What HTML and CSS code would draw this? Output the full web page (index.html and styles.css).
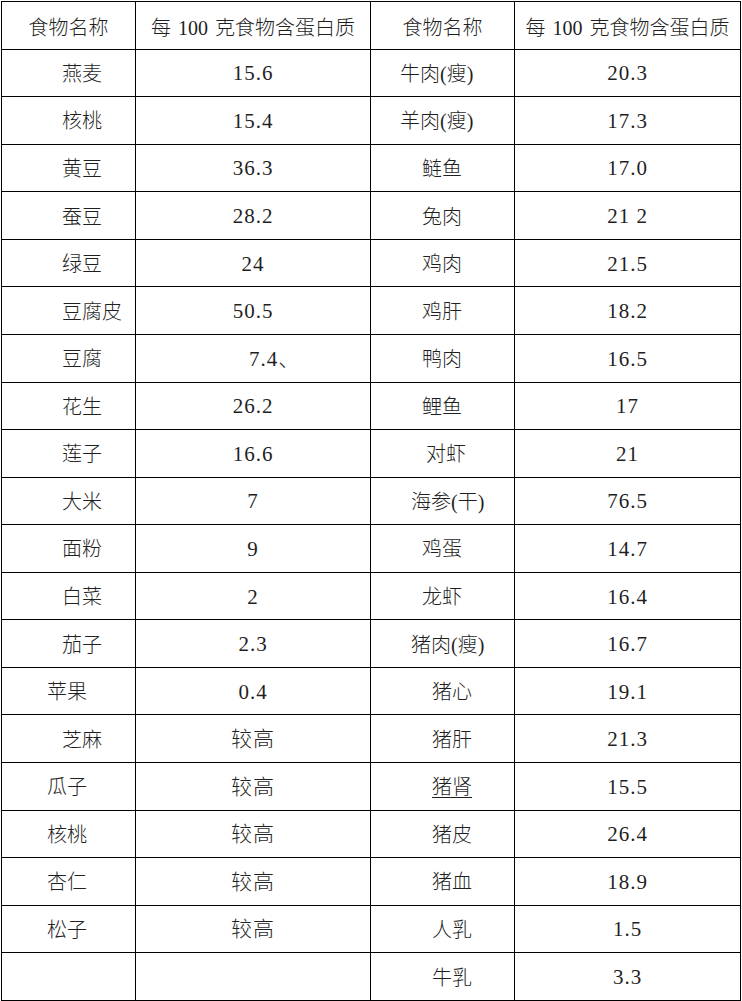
FILE: index.html
```html
<!DOCTYPE html>
<html lang="zh-CN">
<head>
<meta charset="utf-8">
<title>食物蛋白质含量</title>
<link rel="stylesheet" href="styles.css">
</head>
<body>
<table class="grid">
  <colgroup>
    <col class="c1"><col class="c2"><col class="c3"><col class="c4">
  </colgroup>
  <thead>
    <tr>
      <th>食物名称</th><th>每 100 克食物含蛋白质</th><th>食物名称</th><th>每 100 克食物含蛋白质</th>
    </tr>
  </thead>
  <tbody>
    <tr><td class="n in2">燕麦</td><td class="v">15.6</td><td class="m p0">牛肉(瘦)</td><td class="v">20.3</td></tr>
    <tr><td class="n in2">核桃</td><td class="v">15.4</td><td class="m p0">羊肉(瘦)</td><td class="v">17.3</td></tr>
    <tr><td class="n in2">黄豆</td><td class="v">36.3</td><td class="m p2">鲢鱼</td><td class="v">17.0</td></tr>
    <tr><td class="n in2">蚕豆</td><td class="v">28.2</td><td class="m p2">兔肉</td><td class="v">21 2</td></tr>
    <tr><td class="n in2">绿豆</td><td class="v">24</td><td class="m p2">鸡肉</td><td class="v">21.5</td></tr>
    <tr><td class="n in2">豆腐皮</td><td class="v">50.5</td><td class="m p2">鸡肝</td><td class="v">18.2</td></tr>
    <tr><td class="n in2">豆腐</td><td class="v off">7.4、</td><td class="m p2">鸭肉</td><td class="v">16.5</td></tr>
    <tr><td class="n in2">花生</td><td class="v">26.2</td><td class="m p2">鲤鱼</td><td class="v">17</td></tr>
    <tr><td class="n in2">莲子</td><td class="v">16.6</td><td class="m p3">对虾</td><td class="v">21</td></tr>
    <tr><td class="n in2">大米</td><td class="v">7</td><td class="m p1">海参(干)</td><td class="v">76.5</td></tr>
    <tr><td class="n in2">面粉</td><td class="v">9</td><td class="m p2">鸡蛋</td><td class="v">14.7</td></tr>
    <tr><td class="n in2">白菜</td><td class="v">2</td><td class="m p2">龙虾</td><td class="v">16.4</td></tr>
    <tr><td class="n in2">茄子</td><td class="v">2.3</td><td class="m p1">猪肉(瘦)</td><td class="v">16.7</td></tr>
    <tr><td class="n in1">苹果</td><td class="v">0.4</td><td class="m p4">猪心</td><td class="v">19.1</td></tr>
    <tr><td class="n in2">芝麻</td><td class="v">较高</td><td class="m p4">猪肝</td><td class="v">21.3</td></tr>
    <tr><td class="n in1">瓜子</td><td class="v">较高</td><td class="m p4"><span class="ul">猪肾</span></td><td class="v">15.5</td></tr>
    <tr><td class="n in1">核桃</td><td class="v">较高</td><td class="m p4">猪皮</td><td class="v">26.4</td></tr>
    <tr><td class="n in1">杏仁</td><td class="v">较高</td><td class="m p4">猪血</td><td class="v">18.9</td></tr>
    <tr><td class="n in1">松子</td><td class="v">较高</td><td class="m p4">人乳</td><td class="v">1.5</td></tr>
    <tr><td class="n in1"></td><td class="v"></td><td class="m p4">牛乳</td><td class="v">3.3</td></tr>
  </tbody>
</table>
</body>
</html>
```
FILE: styles.css
```css
html, body {
  margin: 0;
  padding: 0;
  background: #ffffff;
}

.grid {
  margin: 1px 0 0 1px;
  width: 740px;
  table-layout: fixed;
  border-collapse: separate;
  border-spacing: 0;
  border-left: 1px solid #000;
  border-top: 1px solid #000;
  font-family: "Liberation Serif", "Noto Sans CJK SC", serif;
  font-size: 20px;
  color: #1f1f1f;
}

.c1 { width: 134px; }
.c2 { width: 235px; }
.c3 { width: 144px; }
.c4 { width: 226px; }

.grid tr {
  height: 47.57px;
}

.grid th,
.grid td {
  border-right: 1px solid #000;
  border-bottom: 1px solid #000;
  padding: 2px 0 0 0;
  line-height: 1;
  font-weight: 300;
  vertical-align: middle;
  text-align: center;
  white-space: nowrap;
}

.grid th {
  font-size: 20px;
  padding-top: 5px;
  word-spacing: 2px;
}

.grid td.n,
.grid td.m {
  text-align: left;
}

.in1 { padding-left: 45px !important; }
.in2 { padding-left: 60px !important; }

.p0 { padding-left: 29px !important; }
.p1 { padding-left: 40px !important; }
.p2 { padding-left: 51px !important; }
.p3 { padding-left: 55px !important; }
.p4 { padding-left: 61px !important; }

.grid td.v {
  font-size: 21px;
  letter-spacing: 1px;
}

.grid td.off {
  text-align: left;
  padding-left: 113px;
}

.ul {
  text-decoration: underline;
  text-decoration-thickness: 1px;
  text-underline-offset: 3px;
}
```
